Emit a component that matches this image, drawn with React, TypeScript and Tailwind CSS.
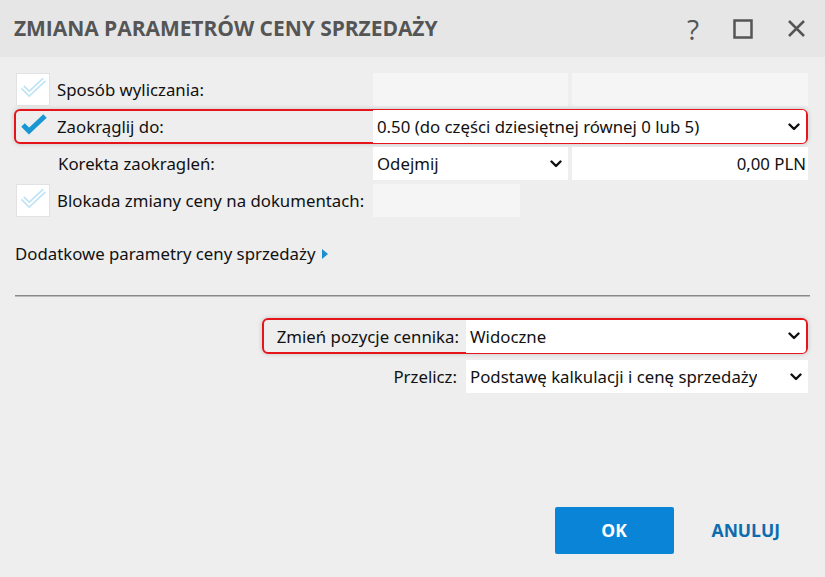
import React from "react";

const font = { fontFamily: "'Noto Sans', 'Open Sans', sans-serif" };

const Chevron = () => (
  <svg width="12" height="8" viewBox="0 0 12 8" className="shrink-0">
    <path d="M1.5 1.5 L6 6 L10.5 1.5" fill="none" stroke="#111" strokeWidth="2.4" strokeLinecap="round" strokeLinejoin="round" />
  </svg>
);

const CheckBox = ({ checked }: { checked?: boolean }) => (
  <div
    className={`w-[34px] h-[33px] shrink-0 flex items-center justify-center ${
      checked ? "" : "bg-white border border-[#e2e2e2]"
    }`}
  >
    <svg width="34" height="33" viewBox="0 0 34 33">
      {checked ? (
        <path d="M7 15 L13 21 L29 6" fill="none" stroke="#1996d4" strokeWidth="5" strokeLinejoin="miter" />
      ) : (
        <>
          <path d="M6 14 L13 21 L29 6" fill="none" stroke="#bfe3f4" strokeWidth="5.5" strokeLinejoin="miter" />
          <path d="M6 14 L13 21 L29 6" fill="none" stroke="#ffffff" strokeWidth="2" strokeLinejoin="miter" />
        </>
      )}
    </svg>
  </div>
);

const Select = ({ value, className }: { value: string; className: string }) => (
  <div className={`h-[33px] bg-white flex items-center justify-between pl-[4px] pr-[6px] ${className}`}>
    <span className="truncate">{value}</span>
    <Chevron />
  </div>
);

export default function App() {
  return (
    <div className="w-[825px] h-[577px] bg-[#eeeeee] text-[16.8px] text-[#111] flex flex-col" style={font}>
      {/* title bar */}
      <div className="h-[57px] bg-[#e6e6e6] flex items-center pl-[14px] pr-[19px] shrink-0">
        <h1 className="flex-1 text-[21px] font-bold text-[#555] tracking-[-0.05px]" style={{ fontFamily: "'Open Sans', sans-serif" }}>
          ZMIANA PARAMETRÓW CENY SPRZEDAŻY
        </h1>
        <div className="flex items-center gap-[34px] text-[#555]">
          <span className="text-[28px] leading-none font-normal" style={{ fontFamily: "'Open Sans', sans-serif" }}>?</span>
          <svg width="20" height="20" viewBox="0 0 20 20">
            <rect x="1.5" y="1.5" width="17" height="17" fill="none" stroke="#555" strokeWidth="2.5" />
          </svg>
          <svg width="19" height="19" viewBox="0 0 19 19">
            <path d="M2 2 L17 17 M17 2 L2 17" stroke="#555" strokeWidth="2.5" />
          </svg>
        </div>
      </div>

      {/* parameters */}
      <div className="flex flex-col gap-[4px] pl-[16px] pr-[17px] pt-[16px]">
        <div className="flex items-center h-[33px]">
          <CheckBox />
          <span className="ml-[7px] w-[316px]">Sposób wyliczania:</span>
          <div className="flex gap-[4px] flex-1">
            <div className="h-[33px] w-[195px] bg-[#f5f5f5]" />
            <div className="h-[33px] flex-1 bg-[#f5f5f5]" />
          </div>
        </div>

        <div className="flex items-center h-[35px] -ml-[2px] -my-[1px] border-2 border-[#e5151b] rounded-[6px] shadow-[0_0_5px_rgba(0,0,0,0.18)] bg-[#eeeeee]">
          <CheckBox checked />
          <span className="ml-[7px] w-[316px]">Zaokrąglij do:</span>
          <Select value="0.50 (do części dziesiętnej równej 0 lub 5)" className="flex-1 h-[31px] rounded-r-[4px]" />
        </div>

        <div className="flex items-center h-[33px]">
          <div className="w-[34px] shrink-0" />
          <span className="ml-[8px] w-[315px]">Korekta zaokragleń:</span>
          <div className="flex gap-[4px] flex-1">
            <Select value="Odejmij" className="w-[195px]" />
            <div className="h-[33px] flex-1 bg-white flex items-center justify-end pr-[2px]">0,00 PLN</div>
          </div>
        </div>

        <div className="flex items-center h-[33px]">
          <CheckBox />
          <span className="ml-[7px] w-[316px]">Blokada zmiany ceny na dokumentach:</span>
          <div className="h-[33px] w-[147px] bg-[#f5f5f5]" />
        </div>
      </div>

      <div className="pl-[15px] mt-[24px] flex items-center gap-[7px]">
        <span>Dodatkowe parametry ceny sprzedaży</span>
        <svg width="6" height="10" viewBox="0 0 6 10">
          <path d="M0 0 L6 5 L0 10 Z" fill="#1b8fc9" />
        </svg>
      </div>

      <div className="mx-[15px] mt-[29px] h-[2px] bg-[#8a8a8a] border-b border-[#bcbcbc]" />

      <div className="flex flex-col items-end gap-[6px] pr-[17px] mt-[21px]">
        <div className="flex items-center h-[36px] w-[546px] border-2 border-[#e5151b] rounded-[6px] shadow-[0_0_5px_rgba(0,0,0,0.18)]">
          <span className="w-[202px] text-right pr-[7px]">Zmień pozycje cennika:</span>
          <Select value="Widoczne" className="flex-1 h-[32px] rounded-r-[4px]" />
        </div>
        <div className="flex items-center h-[33px] w-[546px]">
          <span className="w-[204px] text-right pr-[9px]">Przelicz:</span>
          <Select value="Podstawę kalkulacji i cenę sprzedaży" className="flex-1" />
        </div>
      </div>

      <div className="flex-1" />

      <div className="flex items-center justify-end pb-[23px] pr-[45px] gap-[38px]">
        <button className="w-[119px] h-[47px] bg-[#0a84d6] text-white font-bold text-[17.5px] rounded-[2px]" style={{ fontFamily: "'Open Sans', sans-serif" }}>
          OK
        </button>
        <button className="text-[#0d6cae] font-bold text-[17.5px]" style={{ fontFamily: "'Open Sans', sans-serif" }}>
          ANULUJ
        </button>
      </div>
    </div>
  );
}
